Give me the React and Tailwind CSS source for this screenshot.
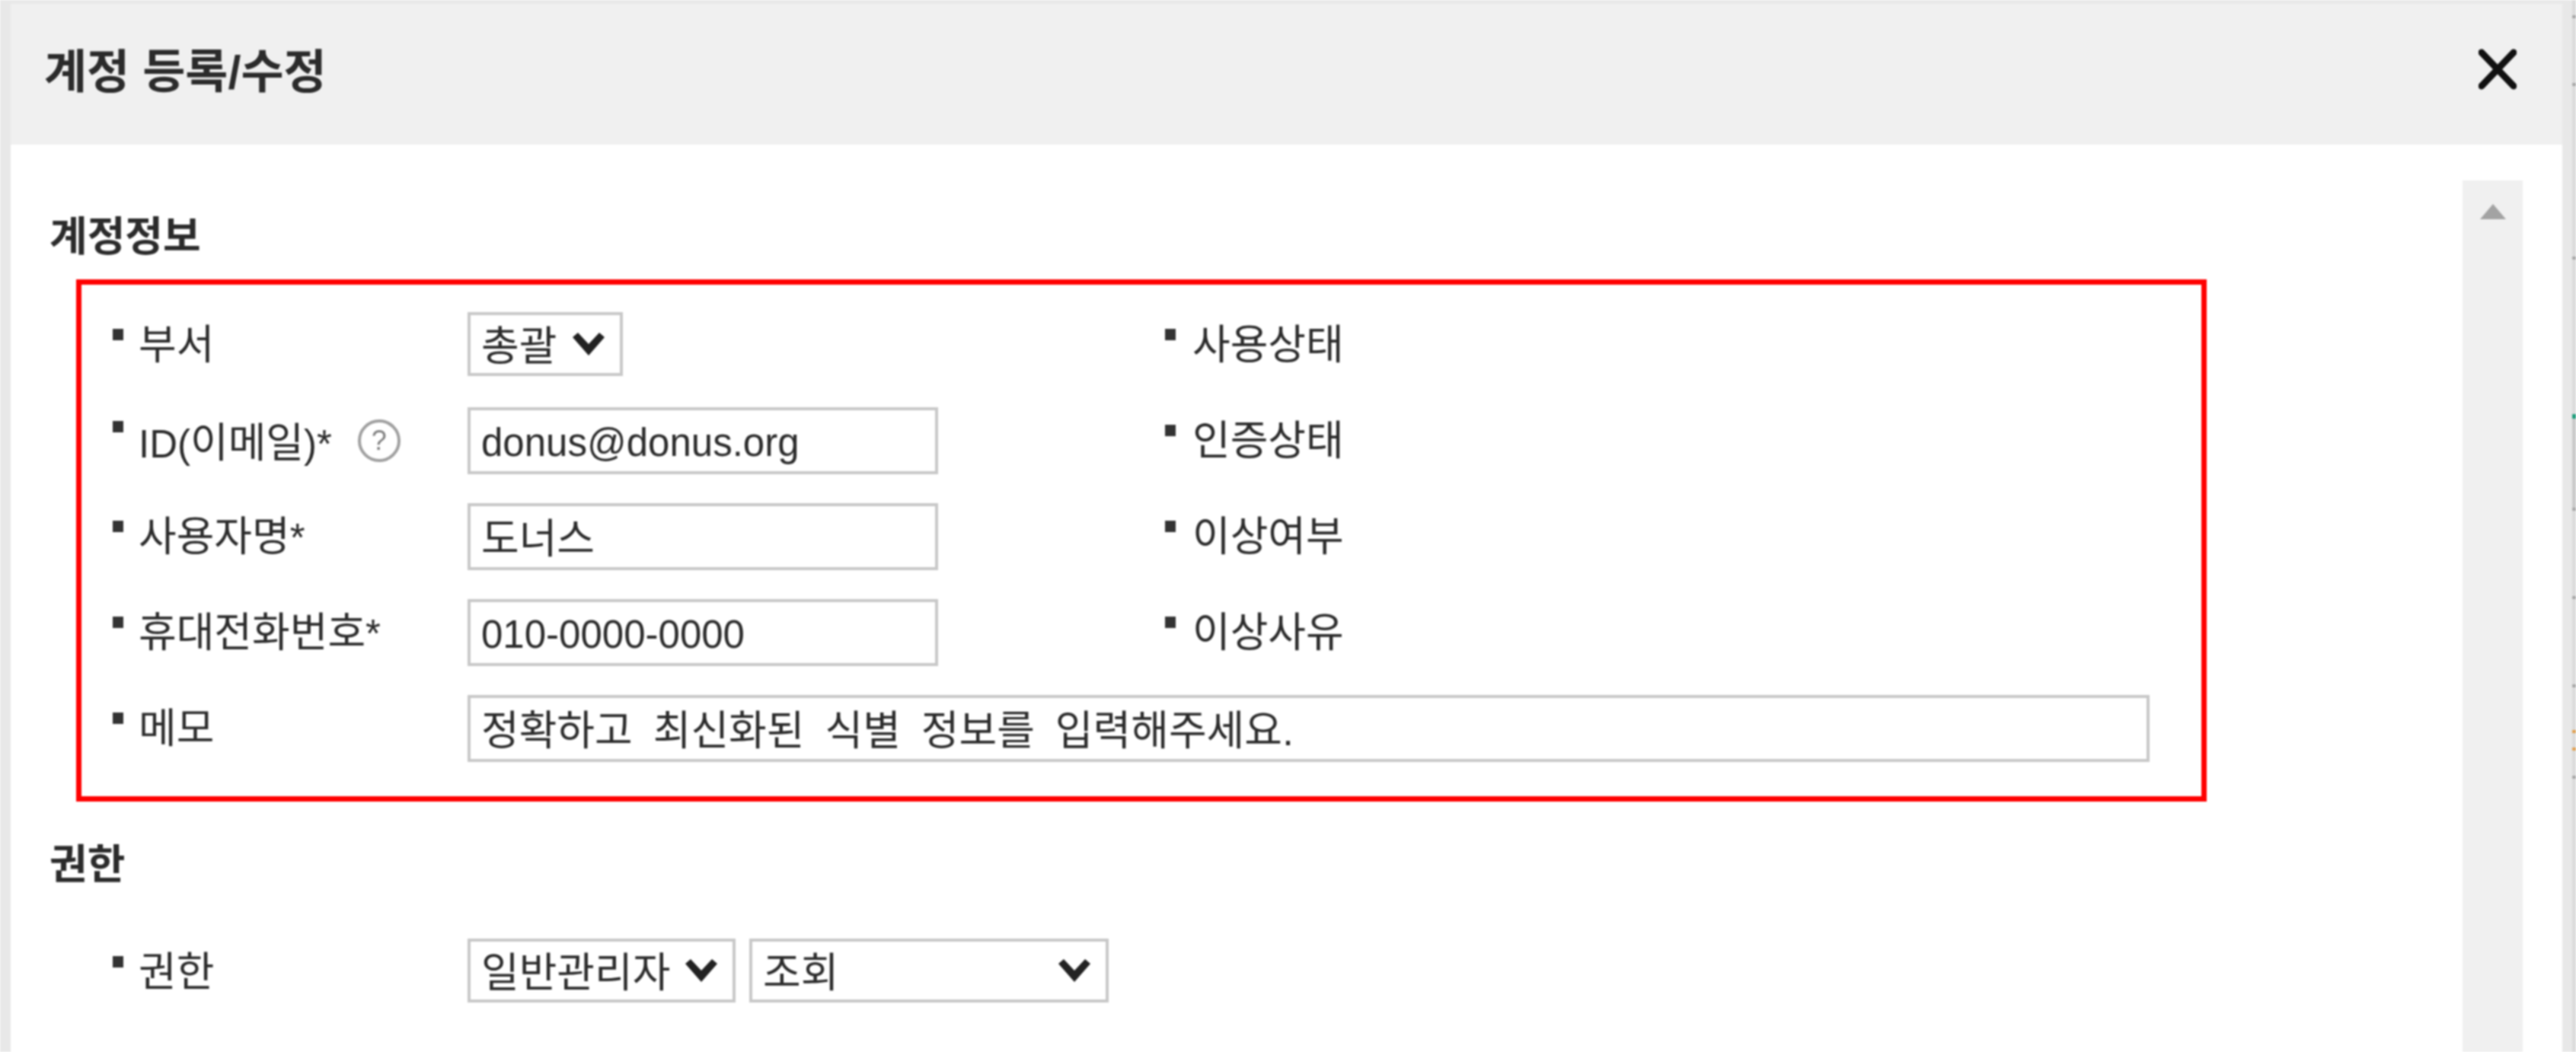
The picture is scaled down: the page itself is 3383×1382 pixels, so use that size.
import React from 'react';

function Chevron() {
  return (
    <svg width="42" height="30" viewBox="0 0 42 30" className="shrink-0">
      <path d="M0 6 L7 0 L21 15 L35 0 L42 6 L21 30 Z" fill="#222" />
    </svg>
  );
}

function CloseIcon() {
  return (
    <svg width="50" height="54" viewBox="0 0 50 54" fill="none" className="mb-[13px]">
      <path d="M4 5 L46 49 M46 5 L4 49" stroke="#111" strokeWidth="9" strokeLinecap="round" />
    </svg>
  );
}

function Label({ children, help }) {
  return (
    <div className={`w-[466px] h-[82px] flex items-center shrink-0 ${help ? 'mt-[3px]' : ''}`}>
      <span className={`w-[14px] h-[15px] bg-[#333] shrink-0 ${help ? 'mb-[38px]' : 'mb-[22px]'}`}></span>
      <span className="ml-[20px] mt-[6px] whitespace-nowrap">{children}</span>
      {help && (
        <span className="ml-[34px] w-[56px] h-[56px] rounded-full border-[4px] border-[#a0a0a0] flex items-center justify-center text-[36px] leading-none text-[#808080]">
          ?
        </span>
      )}
    </div>
  );
}

function SideLabel({ text }) {
  return (
    <div className="ml-[298px] h-[82px] flex items-center">
      <span className="w-[14px] h-[15px] bg-[#333] mb-[22px] shrink-0"></span>
      <span className="ml-[22px] mt-[6px] whitespace-nowrap">{text}</span>
    </div>
  );
}

function Star() {
  return <span className="text-[51px]">*</span>;
}

function Field({ value, wide, latin }) {
  return (
    <div className={`h-[88px] pl-[14px] flex items-center border-[4px] border-[#c8c8c8] whitespace-nowrap ${wide ? 'w-[2209px] [word-spacing:12px]' : 'w-[618px]'} ${latin ? 'text-[51px]' : ''}`}>
      <span className="mt-[7px]">{value}</span>
    </div>
  );
}

function Select({ value, width }) {
  return (
    <div className={`h-[84px] pl-[14px] pr-[20px] flex items-center justify-between border-[4px] border-[#c8c8c8] whitespace-nowrap ${width}`}>
      <span className="mt-[6px]">{value}</span>
      <Chevron />
    </div>
  );
}

export default function App() {
  return (
    <div className="w-[3383px] h-[1382px] flex bg-[#e8e8e8] overflow-hidden blur-[1px] text-[54px] text-[#2b2b2b] font-['Liberation_Sans','Noto_Sans_CJK_KR',sans-serif]">
      {/* modal */}
      <div className="ml-[14px] mt-[5px] w-[3351px] flex flex-col bg-white shrink-0">
        <div className="h-[185px] bg-[#f0f0f0] pl-[44px] pr-[60px] flex items-center justify-between shrink-0">
          <h1 className="text-[61px] font-bold mb-[4px]">계정 등록/수정</h1>
          <CloseIcon />
        </div>

        <div className="flex-1 flex">
          <div className="pl-[51px] pt-[91px] w-[3220px]">
            <h2 className="h-[60px] leading-[60px] font-bold">계정정보</h2>

            <div className="mt-[26px] ml-[35px] w-[2798px] h-[686px] border-[7px] border-[#ff0000] pt-[35px] pl-[41px] flex flex-col gap-[38px]">
              <div className="flex h-[88px] items-start">
                <Label>부서</Label>
                <div className="w-[618px] pt-[1px]">
                  <Select value="총괄" width="w-[204px]" />
                </div>
                <SideLabel text="사용상태" />
              </div>
              <div className="flex h-[88px] items-start">
                <Label help>
                  <span className="text-[51px]">ID(</span>이메일<span className="text-[51px]">)*</span>
                </Label>
                <Field value="donus@donus.org" latin />
                <SideLabel text="인증상태" />
              </div>
              <div className="flex h-[88px] items-start">
                <Label>사용자명<Star /></Label>
                <Field value="도너스" />
                <SideLabel text="이상여부" />
              </div>
              <div className="flex h-[88px] items-start">
                <Label>휴대전화번호<Star /></Label>
                <Field value="010-0000-0000" latin />
                <SideLabel text="이상사유" />
              </div>
              <div className="flex h-[88px] items-start">
                <Label>메모</Label>
                <Field value="정확하고 최신화된 식별 정보를 입력해주세요." wide />
              </div>
            </div>

            <h2 className="mt-[53px] h-[60px] leading-[60px] font-bold">권한</h2>

            <div className="mt-[67px] pl-[83px] flex items-start">
              <Label>권한</Label>
              <div className="flex gap-[18px]">
                <Select value="일반관리자" width="w-[352px]" />
                <Select value="조회" width="w-[472px]" />
              </div>
            </div>
          </div>

          {/* scroll track */}
          <div className="mt-[47px] ml-auto mr-[52px] w-[79px] bg-[#f0f0f0] flex justify-center pt-[31px]">
            <div className="w-0 h-0 border-x-[17px] border-x-transparent border-b-[20px] border-b-[#a3a3a3]"></div>
          </div>
        </div>
      </div>

      {/* sliver of the page behind the modal */}
      <div className="ml-[13px] w-[5px] h-full bg-[#dcdcdc] flex flex-col shrink-0">
        <div className="mt-[20px] h-[4px] bg-[#a8a8a8]"></div>
        <div className="mt-[85px] h-[4px] bg-[#a8a8a8]"></div>
        <div className="mt-[224px] h-[4px] bg-[#a8a8a8]"></div>
        <div className="mt-[203px] h-[6px] bg-[#1f9e7c]"></div>
        <div className="h-[117px] bg-[#cacaca]"></div>
        <div className="h-[4px] bg-[#a8a8a8]"></div>
        <div className="mt-[112px] h-[4px] bg-[#a8a8a8]"></div>
        <div className="mt-[112px] h-[4px] bg-[#a8a8a8]"></div>
        <div className="mt-[56px] h-[4px] bg-[#e0a050]"></div>
        <div className="mt-[19px] h-[4px] bg-[#e0a050]"></div>
        <div className="mt-[33px] h-[4px] bg-[#a8a8a8]"></div>
      </div>
    </div>
  );
}
